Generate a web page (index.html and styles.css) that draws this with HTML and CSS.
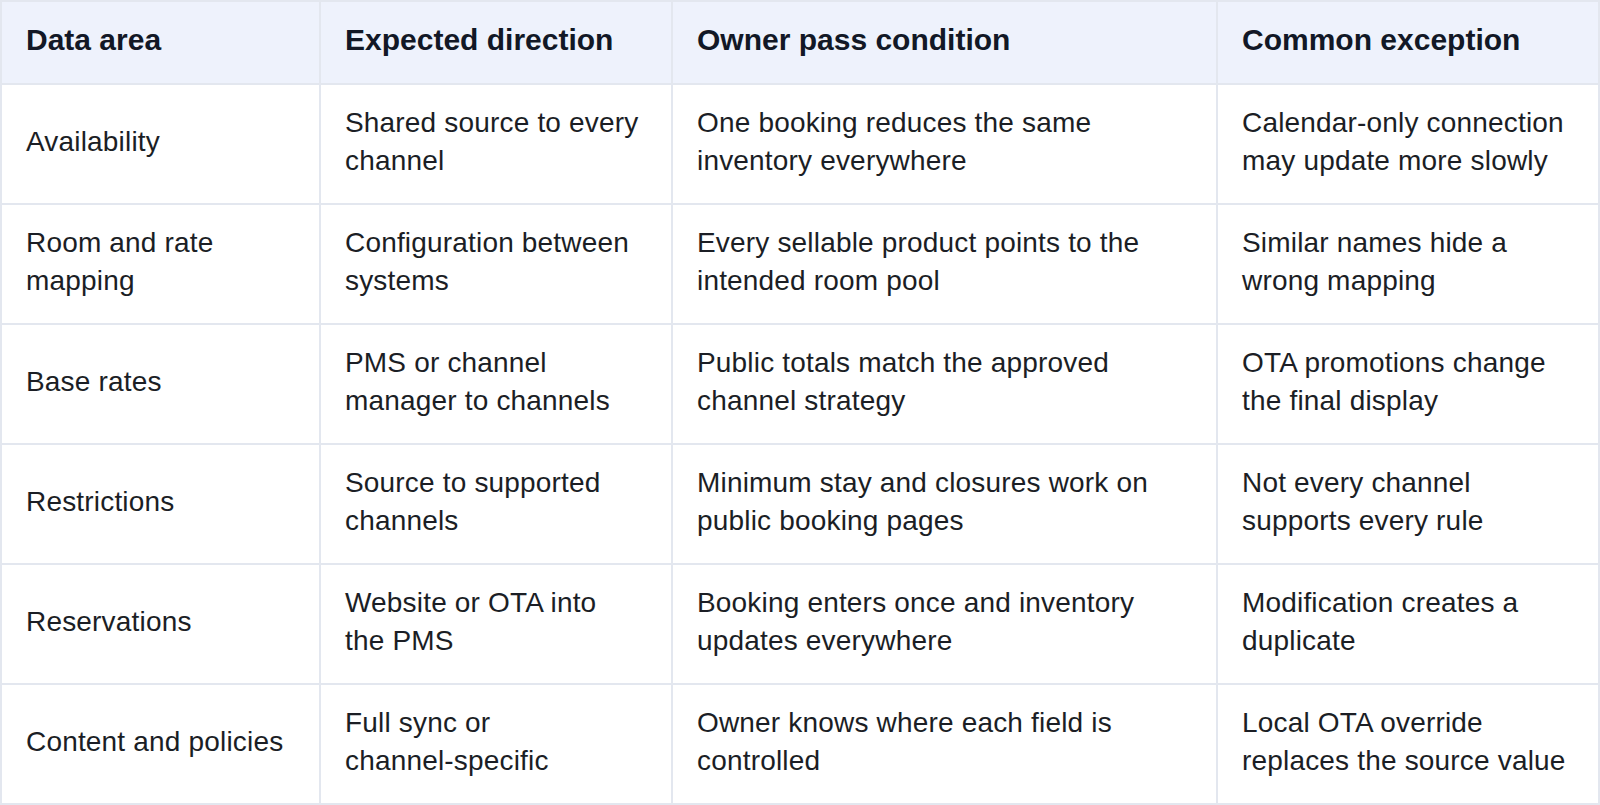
FILE: index.html
```html
<!DOCTYPE html>
<html lang="en">
<head>
<meta charset="utf-8">
<title>Channel sync checks</title>
<link rel="stylesheet" href="styles.css">
</head>
<body>
<table class="sync-table">
  <colgroup>
    <col class="c1">
    <col class="c2">
    <col class="c3">
    <col class="c4">
  </colgroup>
  <thead>
    <tr class="head-row">
      <th>Data area</th>
      <th>Expected direction</th>
      <th>Owner pass condition</th>
      <th>Common exception</th>
    </tr>
  </thead>
  <tbody>
    <tr>
      <td>Availability</td>
      <td>Shared source to every channel</td>
      <td>One booking reduces the same inventory everywhere</td>
      <td>Calendar-only connection may update more slowly</td>
    </tr>
    <tr>
      <td>Room and rate mapping</td>
      <td>Configuration between systems</td>
      <td>Every sellable product points to the intended room pool</td>
      <td>Similar names hide a wrong mapping</td>
    </tr>
    <tr>
      <td>Base rates</td>
      <td>PMS or channel manager to channels</td>
      <td>Public totals match the approved channel strategy</td>
      <td>OTA promotions change the final display</td>
    </tr>
    <tr>
      <td>Restrictions</td>
      <td>Source to supported channels</td>
      <td>Minimum stay and closures work on public booking pages</td>
      <td>Not every channel supports every rule</td>
    </tr>
    <tr>
      <td>Reservations</td>
      <td>Website or OTA into <span class="keep">the PMS</span></td>
      <td>Booking enters once and inventory updates everywhere</td>
      <td>Modification creates a duplicate</td>
    </tr>
    <tr>
      <td>Content and policies</td>
      <td>Full sync or <span class="keep">channel-specific</span></td>
      <td>Owner knows where each field is controlled</td>
      <td>Local OTA override replaces the source value</td>
    </tr>
  </tbody>
</table>
</body>
</html>
```

FILE: styles.css
```css
html, body {
  margin: 0;
  padding: 0;
  background: #ffffff;
}

body {
  font-family: "Liberation Sans", Arial, Helvetica, sans-serif;
  color: #1b1e25;
  width: 1600px;
  height: 805px;
  overflow: hidden;
}

.sync-table {
  width: 1600px;
  table-layout: fixed;
  border-collapse: collapse;
  border: 2px solid #e3e7ef;
}

.c1 { width: 319px; }
.c2 { width: 352px; }
.c3 { width: 545px; }
.c4 { width: 382px; }

.sync-table th,
.sync-table td {
  border: 2px solid #e3e7ef;
  padding: 0 24px 5px 24px;
  vertical-align: middle;
  text-align: left;
}

.sync-table th {
  background: #eef2fc;
  color: #121826;
  font-size: 30px;
  font-weight: 700;
  line-height: 36px;
}

.head-row {
  height: 83px;
}

.sync-table td {
  font-size: 28px;
  font-weight: 400;
  line-height: 38px;
  letter-spacing: 0.18px;
}

.sync-table tbody tr {
  height: 120px;
}

.keep {
  white-space: nowrap;
}
```
